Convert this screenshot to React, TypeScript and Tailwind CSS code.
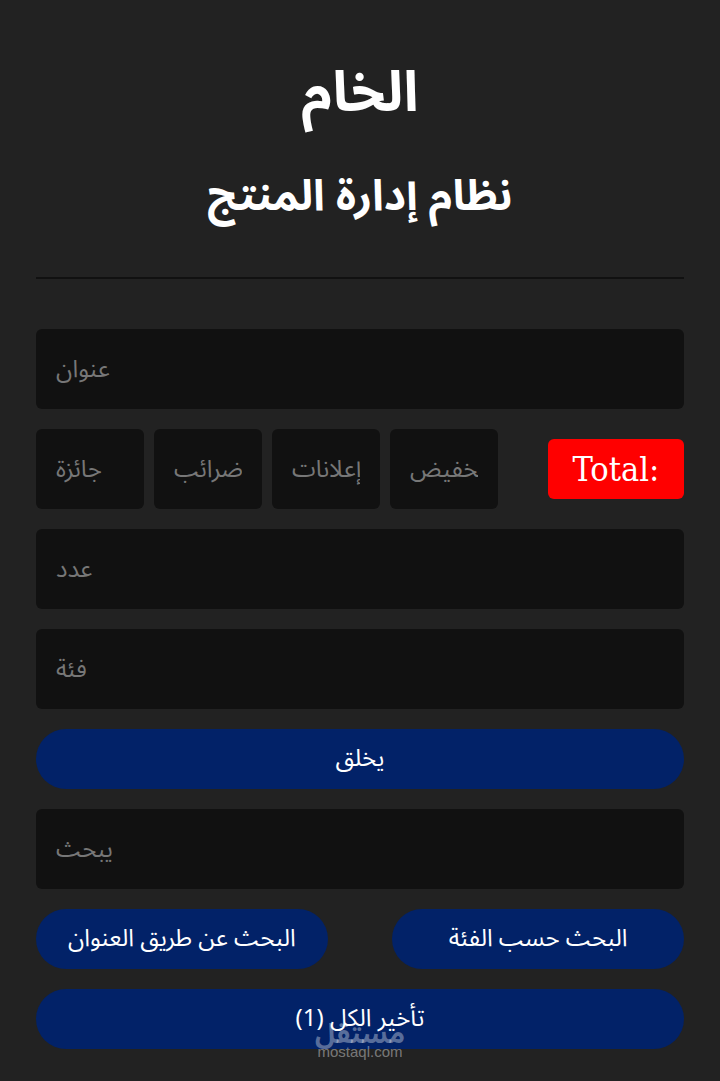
import React from "react";

const arabic = "font-['Noto_Sans_Arabic','DejaVu_Sans',sans-serif]";

function Field({ placeholder, className = "" }: { placeholder: string; className?: string }) {
  return (
    <input
      type="text"
      placeholder={placeholder}
      className={`h-20 rounded-md bg-[#111111] px-5 text-[24px] text-white outline-none placeholder:text-[#777777] ${arabic} ${className}`}
    />
  );
}

function Btn({ label, className = "" }: { label: string; className?: string }) {
  return (
    <button
      className={`h-[60px] rounded-full bg-[#022268] text-[24px] text-white ${arabic} ${className}`}
    >
      {label}
    </button>
  );
}

export default function App() {
  return (
    <div className="relative min-h-screen bg-[#222222]">
      <div className="mx-auto flex w-[90%] flex-col">
        <div className={`flex flex-col items-center pt-[58px] text-white ${arabic}`}>
          <h1 className="text-[56px] font-bold leading-[70px]">الخام</h1>
          <h2 className="mt-[41px] text-[43px] font-bold leading-[56px]">نظام إدارة المنتج</h2>
        </div>
        <div className="mt-[52px] h-[2px] bg-[#111111]" />
        <div className="mt-[50px] flex flex-col gap-5">
          <Field placeholder="عنوان" className="w-full" />
          <div className="flex items-center gap-[10px]">
            <Field placeholder="جائزة" className="w-[108px] min-w-0" />
            <Field placeholder="ضرائب" className="w-[108px] min-w-0" />
            <Field placeholder="إعلانات" className="w-[108px] min-w-0" />
            <Field placeholder="تخفيض" className="w-[108px] min-w-0" />
            <div className="ml-auto flex h-[60px] w-[136px] items-center justify-center rounded-md bg-[#ff0000] font-['DejaVu_Serif',serif] text-[34px] text-white font-stretch-condensed">
              Total:
            </div>
          </div>
          <Field placeholder="عدد" className="w-full" />
          <Field placeholder="فئة" className="w-full" />
          <Btn label="يخلق" className="w-full" />
          <Field placeholder="يبحث" className="w-full" />
          <div className="flex justify-between">
            <Btn label="البحث عن طريق العنوان" className="w-[45%]" />
            <Btn label="البحث حسب الفئة" className="w-[45%]" />
          </div>
          <Btn label="تأخير الكل (1)" className="w-full" />
        </div>
      </div>
      <div className="pointer-events-none absolute left-1/2 top-[1021px] flex -translate-x-1/2 flex-col items-center">
        <span className={`text-[27px] font-bold leading-[28px] text-white/35 ${arabic}`}>مستقل</span>
        <span className="-mt-1 font-['Liberation_Sans',sans-serif] text-[15px] leading-[14px] text-white/40">mostaql.com</span>
      </div>
    </div>
  );
}
